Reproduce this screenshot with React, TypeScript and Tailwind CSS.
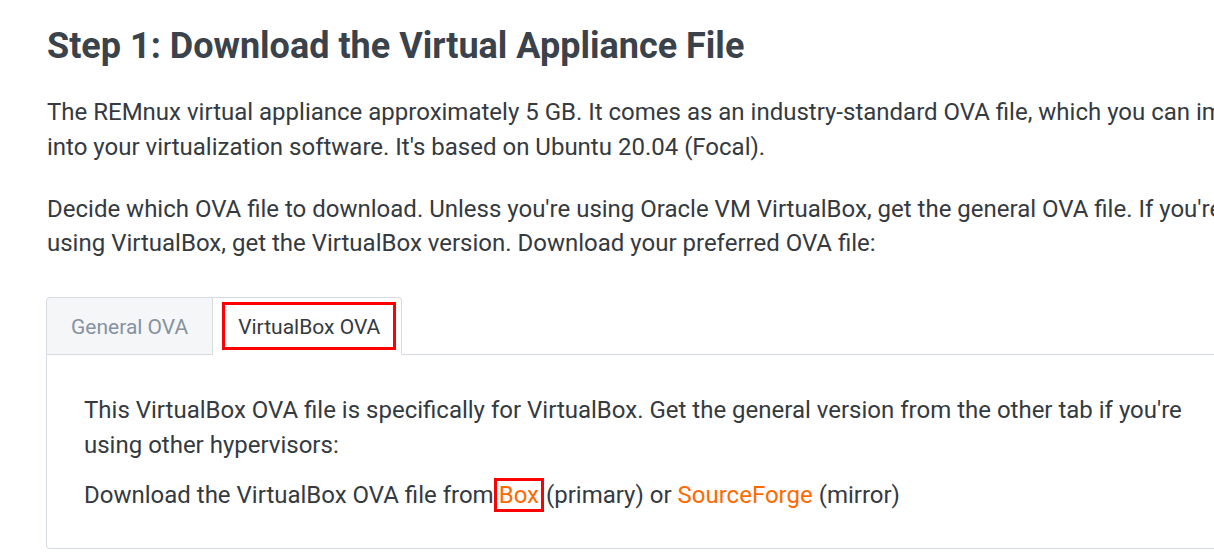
import React from "react";

const App: React.FC = () => {
  return (
    <div className="w-[1214px] h-[553px] overflow-hidden bg-white text-[#343a40] font-['Roboto',sans-serif]">
      <div className="w-[1226px] ml-[47px] pt-[25px]">
        <h2 className="text-[36px] leading-[43px] font-bold text-[#3a424b]">Step 1: Download the Virtual Appliance File</h2>

        <p className="mt-[27px] text-[24px] leading-[35px]">
          The REMnux virtual appliance approximately 5 GB. It comes as an industry-standard OVA file, which you can import
          into your virtualization software. It's based on Ubuntu 20.04 (Focal).
        </p>
        <p className="mt-[27px] text-[24px] leading-[34px]">
          Decide which OVA file to download. Unless you're using Oracle VM VirtualBox, get the general OVA file. If you're
          using VirtualBox, get the VirtualBox version. Download your preferred OVA file:
        </p>

        {/* tabs */}
        <div className="mt-[37px] -ml-px flex border-b border-[#d6dbe2] text-[21px]">
          <button className="h-[58px] px-[24px] pt-[3px] bg-[#f5f6f8] border border-[#d6dbe2] rounded-tl-[4px] text-[#8592a0] -mb-px">
            General OVA
          </button>
          <button className="h-[58px] pl-[9px] pr-[5px] bg-white border border-l-0 border-[#d6dbe2] border-b-white rounded-tr-[4px] -mb-px flex items-center">
            <span className="border-[3px] border-[#ff0000] h-[48px] px-[13px] pt-[3px] flex items-center text-[#343a40]">VirtualBox OVA</span>
          </button>
        </div>
        <div className="-ml-px border border-t-0 border-[#d6dbe2] rounded-b-[4px] px-[37px] pt-[38px] pb-[35px] text-[24px] leading-[35px]">
          <p>
            This VirtualBox OVA file is specifically for VirtualBox. Get the general version from the other tab if you're
            using other hypervisors:
          </p>
          <p className="mt-[15px]">
            Download the VirtualBox OVA file from
            <a className="inline-block border-[3px] border-[#ff0000] px-[2px] leading-[28px] text-[#ff6a00]">Box</a>
            <span className="ml-[2px]">(primary) or </span>
            <a className="text-[#ff6a00]">SourceForge</a> (mirror)
          </p>
        </div>
      </div>
    </div>
  );
};

export default App;
